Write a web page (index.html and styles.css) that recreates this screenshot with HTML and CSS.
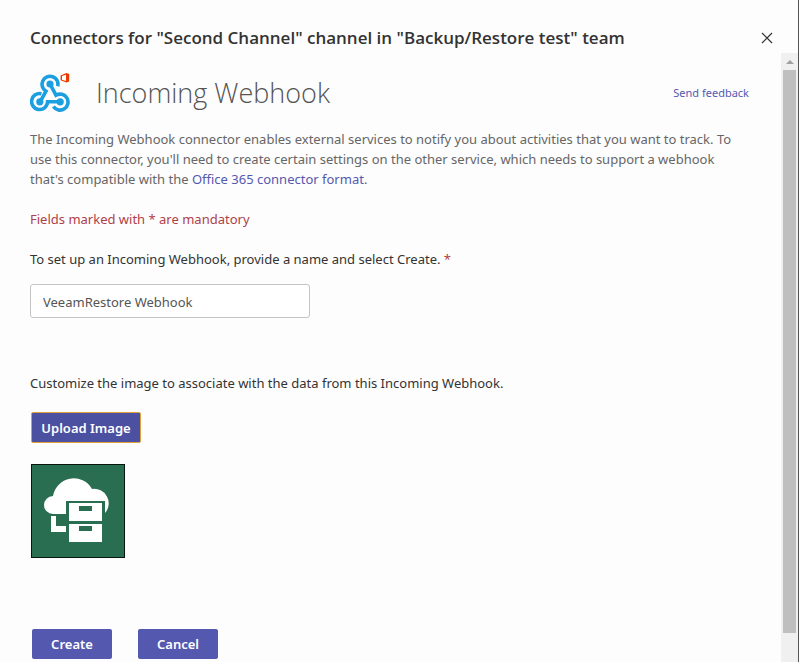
FILE: index.html
```html
<!DOCTYPE html>
<html lang="en">
<head>
  <meta charset="UTF-8">
  <meta name="viewport" content="width=device-width, initial-scale=1.0">
  <title>Connectors | Incoming Webhook</title>
  <link rel="stylesheet" href="styles.css">
</head>
<body>
  <div class="dialog">
    <header class="dialog-header">
      <h1 class="dialog-title">Connectors for "Second Channel" channel in "Backup/Restore test" team</h1>
      <button type="button" class="close-btn" aria-label="Close">
        <svg width="12" height="12" viewBox="0 0 12 12">
          <path d="M1 1L11 11M11 1L1 11" stroke="#333" stroke-width="1.2" fill="none"/>
        </svg>
      </button>
    </header>

    <div class="dialog-body">
      <form class="content">
        <div class="connector-header">
          <svg class="connector-logo" width="40" height="40" viewBox="0 0 40 40">
            <g fill="none" stroke="#1b9fe0" stroke-width="3.6">
              <path d="M10.2 28.6L16 18.2A8 8 0 1 1 27.8 13.2"/>
              <path d="M11.4 20.7A8 8 0 1 0 17.6 28.8H30"/>
              <path d="M20 11L26 22.2A8 8 0 1 1 23.4 33.6"/>
            </g>
            <g fill="#1b9fe0">
              <circle cx="20" cy="11" r="3.6"/>
              <circle cx="9.8" cy="28.8" r="3.6"/>
              <circle cx="30.2" cy="28.8" r="3.6"/>
            </g>
            <path d="M30.6 2.4L36.4 0L39.2 .9V8.5L36.4 9.4L30.6 7.2ZM32 3.1V6.8L36 7.9V1.7Z" fill="#eb3c00" fill-rule="evenodd"/>
          </svg>
          <h2 class="connector-name">Incoming Webhook</h2>
          <a href="#" class="feedback-link">Send feedback</a>
        </div>

        <p class="description">The Incoming Webhook connector enables external services to notify you about activities that you want to track. To use this connector, you'll need to create certain settings on the other service, which needs to support a webhook that's compatible with the <a href="#">Office 365 connector format</a>.</p>

        <p class="mandatory">Fields marked with * are mandatory</p>

        <label class="form-label" for="name">To set up an Incoming Webhook, provide a name and select Create. <span class="star">*</span></label>
        <input type="text" id="name" class="form-input" value="VeeamRestore Webhook" required>

        <p class="image-text">Customize the image to associate with the data from this Incoming Webhook.</p>
        <button type="button" class="btn upload-btn">Upload Image</button>

        <svg class="preview" width="94" height="94" viewBox="0 0 94 94">
          <rect x=".5" y=".5" width="93" height="93" fill="#296e50" stroke="#06150e"/>
          <path d="M22 50A9 9 0 0 1 22 32A21 21 0 0 1 61 25A14.5 14.5 0 0 1 74 49V37H35V50Z" fill="#fff"/>
          <path d="M20 52H25V62H35V68H20Z" fill="#fff"/>
          <path d="M38 39H71V57H38ZM48 42V47H61V42ZM38 60H71V78H38ZM48 62V67H61V62Z" fill="#fff" fill-rule="evenodd"/>
        </svg>

        <div class="actions">
          <button type="submit" class="btn">Create</button>
          <button type="button" class="btn">Cancel</button>
        </div>
      </form>

      <div class="scrollbar" aria-hidden="true">
        <svg class="scroll-arrow" width="8" height="4" viewBox="0 0 8 4">
          <path d="M0 4L4 0L8 4Z" fill="#a0a0a0"/>
        </svg>
        <div class="scroll-thumb"></div>
      </div>
    </div>
  </div>
</body>
</html>
```

FILE: styles.css
```css
* {
  margin: 0;
  padding: 0;
  box-sizing: border-box;
}

body {
  background-color: #fdfdfd;
  color: #333;
  font-family: 'Noto Sans', 'Open Sans', sans-serif;
  font-size: 13px;
  line-height: 20px;
}

a {
  color: #5558af;
  text-decoration: none;
}

.dialog {
  display: flex;
  flex-direction: column;
  height: 100vh;
  overflow: hidden;
  border-right: 1px solid #555;
}

.dialog-header {
  display: flex;
  align-items: center;
  justify-content: space-between;
  flex-shrink: 0;
  padding: 26px 24px 3px 30px;
}

.dialog-title {
  font-family: 'Open Sans', 'Noto Sans', sans-serif;
  font-size: 17px;
  font-weight: 600;
  line-height: 24px;
}

.close-btn {
  display: flex;
  padding: 1px;
  background: none;
  border: none;
  cursor: pointer;
}

.dialog-body {
  display: flex;
  flex: 1;
  min-height: 0;
}

.content {
  display: flex;
  flex-direction: column;
  align-items: flex-start;
  flex: 1;
  padding: 20px 32px 0 30px;
}

.connector-header {
  display: flex;
  align-items: center;
  width: 100%;
  height: 40px;
  margin-bottom: 16px;
}

.connector-name {
  margin-left: 26px;
  color: #555;
  font-family: 'Open Sans', 'Noto Sans', sans-serif;
  font-size: 27px;
  font-weight: 300;
  line-height: 42px;
}

.feedback-link {
  margin-left: auto;
  font-size: 11px;
}

.description {
  padding-right: 4px;
  color: #666;
}

.mandatory {
  margin: 20px 0;
  color: #b04048;
}

.star {
  color: #b04048;
}

.form-input {
  width: 280px;
  height: 34px;
  margin-top: 15px;
  padding: 1px 12px 0;
  border: 1px solid #c4c4c4;
  border-radius: 3px;
  background-color: #fff;
  color: #555;
  font: inherit;
}

.image-text {
  margin: 55px 0 19px;
}

.btn {
  width: 80px;
  height: 30px;
  border: none;
  border-radius: 2px;
  background-color: #5558af;
  color: white;
  font: inherit;
  font-weight: 600;
  cursor: pointer;
}

.upload-btn {
  width: 110px;
  height: 31px;
  margin-left: 1px;
  border: 1px solid #e0a040;
  background-color: #4c50a0;
}

.preview {
  margin: 21px 0 0 1px;
}

.actions {
  display: flex;
  gap: 26px;
  margin: 71px 0 0 2px;
}

.scrollbar {
  display: flex;
  flex-direction: column;
  align-items: center;
  width: 17px;
  padding: 7px 0 29px;
  background-color: #f0f0f0;
}

.scroll-arrow {
  flex-shrink: 0;
}

.scroll-thumb {
  flex: 1;
  width: 13px;
  margin-top: 6px;
  background-color: #bfbfbf;
}
```
